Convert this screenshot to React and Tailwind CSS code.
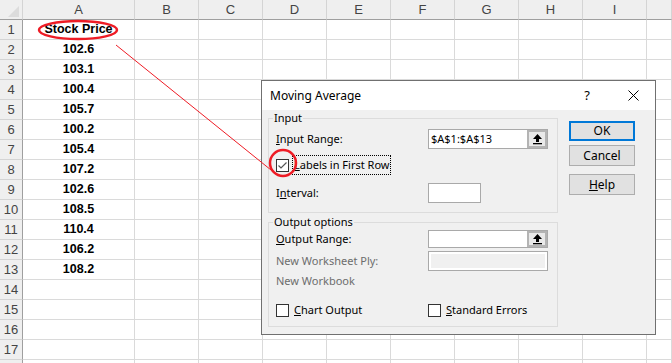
import React from "react";

const COLS = ["A", "B", "C", "D", "E", "F", "G", "H", "I", ""];
const DATA = ["Stock Price", "102.6", "103.1", "100.4", "105.7", "100.2", "105.4", "107.2", "102.6", "108.5", "110.4", "106.2", "108.2"];

function UpArrow() {
  return (
    <svg width="11" height="12" viewBox="0 0 11 12">
      <path d="M5.5 1 L10 6 L7 6 L7 9 L4 9 L4 6 L1 6 Z" fill="#000" />
      <rect x="1" y="10" width="9" height="1.3" fill="#000" />
    </svg>
  );
}

function RangeBox({ h = "h-[20px]" }) {
  return (
    <div className={`flex ${h} w-[120px] border border-[#a9a9a9] bg-white`}>
      <div className="flex-1" />
      <div className="flex w-[20px] items-center justify-center border-2 border-[#b4b4b4] bg-[#e9e9e9]">
        <UpArrow />
      </div>
    </div>
  );
}

function Check({ checked }) {
  return (
    <div className="flex h-[13px] w-[13px] items-center justify-center border border-[#333] bg-white">
      {checked && (
        <svg width="11" height="11" viewBox="0 0 11 11">
          <path d="M1.5 5.5 L4 8 L9.5 2.5" stroke="#555" strokeWidth="1.2" fill="none" />
        </svg>
      )}
    </div>
  );
}

function Btn({ children, primary, cls }) {
  return (
    <div
      className={`flex w-[66px] items-center justify-center bg-[#e1e1e1] ${
        primary ? "border-2 border-[#0078d7]" : "border border-[#adadad]"
      } ${cls}`}
    >
      {children}
    </div>
  );
}

export default function App() {
  const rows = Array.from({ length: 18 }, (_, i) => i + 1);
  return (
    <div className="relative h-[363px] w-[672px] overflow-hidden bg-white font-['Liberation_Sans',sans-serif]">
      {/* Spreadsheet grid */}
      <div className="grid grid-cols-[23px_112px_repeat(8,64px)_1fr] auto-rows-[20px]">
        <div className="relative border-b border-r border-b-[#9f9f9f] border-r-[#d4d4d4] bg-[#efefef]">
          <svg className="absolute bottom-[2px] right-[3px]" width="11" height="11" viewBox="0 0 11 11">
            <path d="M11 0 L11 11 L0 11 Z" fill="#dcdcdc" />
          </svg>
        </div>
        {COLS.map((c, i) => (
          <div
            key={"h" + i}
            className="flex items-center justify-center border-b border-r border-b-[#9f9f9f] border-r-[#d4d4d4] bg-[#efefef] text-[13px] text-[#444]"
          >
            {c}
          </div>
        ))}
        {rows.map((r) => (
          <React.Fragment key={r}>
            <div className="flex items-center justify-center border-b border-r border-b-[#d4d4d4] border-r-[#9f9f9f] bg-[#efefef] text-[13px] text-[#444]">
              {r <= 17 ? r : ""}
            </div>
            {COLS.map((c, i) => (
              <div
                key={c + i}
                className="flex items-center justify-center border-b border-r border-[#dadada] text-[12.5px] font-bold text-black"
              >
                {i === 0 && r <= 13 ? DATA[r - 1] : ""}
              </div>
            ))}
          </React.Fragment>
        ))}
      </div>

      {/* Dialog window */}
      <div className="absolute left-[261px] top-[80px] flex h-[255px] w-[395px] flex-col border border-[#707070] bg-[#f0f0f0] font-['Noto_Sans',sans-serif] text-[11px] text-black">
        <div className="flex h-[29px] shrink-0 items-center bg-white pl-[8px] text-[12px]">
          <span className="flex-1">Moving Average</span>
          <span className="mr-[38px] text-[13px]">?</span>
          <svg className="mr-[16px]" width="11" height="11" viewBox="0 0 11 11">
            <path d="M0.5 0.5 L10.5 10.5 M10.5 0.5 L0.5 10.5" stroke="#000" strokeWidth="1" />
          </svg>
        </div>
        <div className="flex flex-1 gap-[11px] pl-[6px]">
          <div className="flex w-[290px] flex-col">
            {/* Input group */}
            <div className="mt-[8px] flex h-[95px] flex-col border border-[#dcdcdc]">
              <div className="-mt-[9px] ml-[4px] w-fit bg-[#f0f0f0] px-[1px] leading-[16px]">Input</div>
              <div className="mt-[3px] flex h-[20px] items-center">
                <span className="w-[159px] pl-[7px]">
                  <u>I</u>nput Range:
                </span>
                <div className="flex h-[20px] w-[120px] border border-[#a9a9a9] bg-white">
                  <div className="flex-1 pl-[2px] leading-[18px]">$A$1:$A$13</div>
                  <div className="flex w-[20px] items-center justify-center border-2 border-[#b4b4b4] bg-[#e9e9e9]">
                    <UpArrow />
                  </div>
                </div>
              </div>
              <div className="mt-[6px] flex h-[20px] items-center pl-[7px]">
                <Check checked />
                <span className="ml-[3px] flex h-[20px] items-center border border-dotted border-black pl-[1px] pr-[1px]">
                  <u>L</u>abels in First Row
                </span>
              </div>
              <div className="mt-[8px] flex h-[20px] items-center">
                <span className="w-[159px] pl-[7px]">
                  I<u>n</u>terval:
                </span>
                <div className="h-[20px] w-[53px] border border-[#a9a9a9] bg-white" />
              </div>
            </div>

            {/* Output group */}
            <div className="mt-[9px] flex h-[105px] flex-col border border-[#dcdcdc]">
              <div className="-mt-[9px] ml-[4px] w-fit bg-[#f0f0f0] px-[1px] leading-[16px]">Output options</div>
              <div className="flex h-[18px] items-center">
                <span className="w-[159px] pl-[7px]">
                  <u>O</u>utput Range:
                </span>
                <RangeBox h="h-[18px]" />
              </div>
              <div className="mt-[3px] flex h-[20px] items-center">
                <span className="w-[159px] pl-[7px] text-[#6d6d6d]">New Worksheet Ply:</span>
                <div className="h-[20px] w-[120px] border border-[#a9a9a9] bg-white p-[2px]">
                  <div className="h-full w-full bg-[#f0f0f0]" />
                </div>
              </div>
              <div className="flex h-[20px] items-center pl-[7px] text-[#6d6d6d]">New Workbook</div>
              <div className="mt-[9px] flex h-[20px] items-center">
                <div className="flex w-[159px] items-center pl-[7px]">
                  <Check />
                  <span className="ml-[5px]">
                    <u>C</u>hart Output
                  </span>
                </div>
                <Check />
                <span className="ml-[5px]">
                  <u>S</u>tandard Errors
                </span>
              </div>
            </div>
          </div>

          {/* Buttons */}
          <div className="flex flex-col text-[12px]">
            <Btn primary cls="mt-[11px] h-[20px]">OK</Btn>
            <Btn cls="mt-[4px] h-[21px]">Cancel</Btn>
            <Btn cls="mt-[8px] h-[21px]">
              <span>
                <u>H</u>elp
              </span>
            </Btn>
          </div>
        </div>
      </div>

      {/* Red annotations */}
      <svg className="pointer-events-none absolute left-0 top-0" width="672" height="363" viewBox="0 0 672 363">
        <ellipse cx="78" cy="30" rx="39" ry="9" fill="none" stroke="#ee1c25" strokeWidth="2.5" />
        <line x1="116" y1="45" x2="271" y2="170" stroke="#ee1c25" strokeWidth="1" />
        <circle cx="283" cy="163" r="13" fill="none" stroke="#ee1c25" strokeWidth="2.5" />
      </svg>
    </div>
  );
}
